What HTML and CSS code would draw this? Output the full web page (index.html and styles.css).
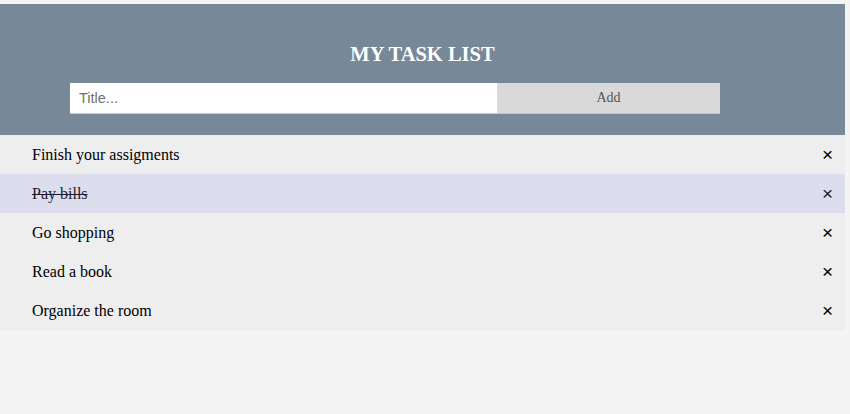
FILE: index.html
```html
<!DOCTYPE html>
<html>
<head>
<meta charset="utf-8">
<link rel="stylesheet" href="styles.css">
</head>
<body>
<div class="header">
  <h2 class="title">MY TASK LIST</h2>
  <div class="form">
    <input class="field" type="text" placeholder="Title...">
    <span class="add">Add</span>
  </div>
</div>
<ul class="list">
  <li class="item"><span>Finish your assigments</span><span class="close">×</span></li>
  <li class="item checked"><span>Pay bills</span><span class="close">×</span></li>
  <li class="item"><span>Go shopping</span><span class="close">×</span></li>
  <li class="item"><span>Read a book</span><span class="close">×</span></li>
  <li class="item"><span>Organize the room</span><span class="close">×</span></li>
</ul>
</body>
</html>
```
FILE: styles.css
```css
html { background: #f4f4f4; }
body {
  margin: 4px 5px 0 0;
  font-family: "Liberation Serif", "Times New Roman", serif;
}
.header {
  background: #778899;
  padding: 39px 0 21px 0;
  display: flex;
  flex-direction: column;
}
.title {
  margin: 0 0 17px 0;
  text-align: center;
  color: #fff;
  font-size: 20.5px;
  line-height: 23px;
  font-weight: bold;
}
.form {
  display: flex;
  margin-left: 70px;
}
.field {
  box-sizing: border-box;
  width: 427px;
  height: 31px;
  margin: 0;
  border: none;
  border-bottom: 1px solid #c9cdd2;
  padding: 0 0 0 9px;
  font-family: "Liberation Sans", Arial, sans-serif;
  font-size: 14.5px;
  outline: none;
  background: #fff;
}
.field::placeholder { color: #6f6f6f; }
.add {
  box-sizing: border-box;
  width: 223px;
  height: 31px;
  background: #d9d9d9;
  border-bottom: 1px solid #c4c8cc;
  color: #555;
  font-size: 14px;
  display: flex;
  align-items: center;
  justify-content: center;
}
.list {
  list-style: none;
  margin: 0;
  padding: 0;
}
.item {
  display: flex;
  justify-content: space-between;
  align-items: center;
  background: #eee;
  padding: 10px 12px 10px 32px;
  font-size: 16px;
  line-height: 19px;
  color: #000;
}
.item.checked {
  background: #dcdeee;
  color: #1c1c2e;
}
.item.checked span:first-child { text-decoration: line-through; }
.close {
  font-family: "Liberation Sans", Arial, sans-serif;
  font-size: 19px;
  line-height: 19px;
}
```
